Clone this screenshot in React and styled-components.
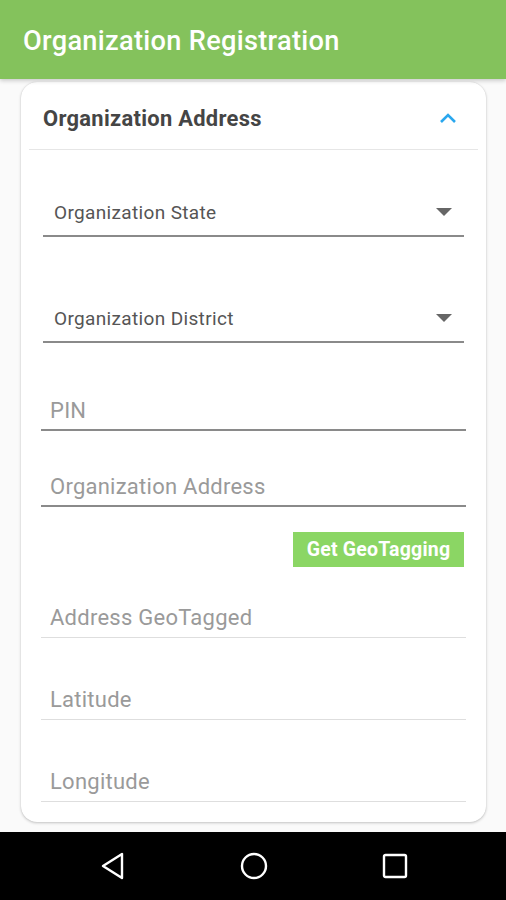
import React from "react";
import styled, { createGlobalStyle } from "styled-components";

const Global = createGlobalStyle`
  html, body { margin: 0; padding: 0; }
  body { background: #fafafa; font-family: Roboto, "Noto Sans", sans-serif; }
`;

const Page = styled.div`
  width: 506px;
  height: 900px;
  display: flex;
  flex-direction: column;
  overflow: hidden;
  background: #fafafa;
`;

const AppBar = styled.header`
  height: 79px;
  box-sizing: border-box;
  flex-shrink: 0;
  background: #84c25c;
  display: flex;
  align-items: center;
  padding: 3px 23px 0;
  box-shadow: 0 2px 4px rgba(0, 0, 0, 0.18);
  position: relative;
  z-index: 1;
`;

const AppTitle = styled.h1`
  margin: 0;
  color: #fff;
  font-size: 27.2px;
  font-weight: 500;
  letter-spacing: 0.3px;
`;

const Content = styled.main`
  flex: 1;
  padding: 3px 20px 0 21px;
`;

const Card = styled.section`
  background: #fff;
  border-radius: 16px;
  box-shadow: 0 1px 3px rgba(0, 0, 0, 0.22), 0 0 1px rgba(0, 0, 0, 0.15);
  padding-bottom: 20px;
`;

const CardHeader = styled.div`
  height: 67px;
  display: flex;
  align-items: center;
  justify-content: space-between;
  padding: 5px 29px 0 22px;
  box-sizing: border-box;
`;

const CardTitle = styled.h2`
  margin: 0;
  font-size: 21.9px;
  font-weight: 700;
  letter-spacing: 0.3px;
  color: #454545;
`;

const Divider = styled.div`
  height: 1px;
  background: #e6e6e6;
  margin: 0 8px;
`;

const Form = styled.div`
  display: flex;
  flex-direction: column;
  padding: 0 20px;
`;

const Select = styled.div`
  height: 46px;
  margin: ${(p) => p.$mt}px 2px 0;
  display: flex;
  align-items: center;
  justify-content: space-between;
  padding: 0 12px 0 11px;
  border-bottom: 2px solid #8a8a8a;
`;

const SelectLabel = styled.span`
  font-size: 19px;
  letter-spacing: 0.35px;
  color: #555;
`;

const Caret = styled.span`
  width: 0;
  height: 0;
  border-left: 8px solid transparent;
  border-right: 8px solid transparent;
  border-top: 8px solid #666;
`;

const Field = styled.div`
  height: ${(p) => (p.$light ? 39 : 38)}px;
  margin-top: ${(p) => p.$mt}px;
  display: flex;
  align-items: center;
  padding: 2px 0 0 9px;
  box-sizing: content-box;
  border-bottom: ${(p) => (p.$light ? "1px solid #dedede" : "2px solid #8a8a8a")};
  font-size: 22px;
  letter-spacing: 0.25px;
  color: #9a9a9a;
`;

const ButtonRow = styled.div`
  display: flex;
  justify-content: flex-end;
  margin-top: 25px;
  padding-right: 2px;
`;

const GeoButton = styled.button`
  width: 171px;
  height: 35px;
  border: none;
  background: #8bd664;
  color: #fff;
  font-family: Roboto, sans-serif;
  font-size: 19.5px;
  font-weight: 700;
  letter-spacing: 0.2px;
  padding: 0;
`;

const NavBar = styled.nav`
  height: 68px;
  flex-shrink: 0;
  margin-top: 9px;
  background: #000;
  display: flex;
  align-items: center;
  justify-content: space-between;
  padding: 0 98px 0 100px;
`;

const NavIcon = styled.svg`
  display: block;
`;

export default function App() {
  return (
    <Page>
      <Global />
      <AppBar>
        <AppTitle>Organization Registration</AppTitle>
      </AppBar>
      <Content>
        <Card>
          <CardHeader>
            <CardTitle>Organization Address</CardTitle>
            <svg width="18" height="12" viewBox="0 0 18 12">
              <path d="M2 10 L9 3 L16 10" fill="none" stroke="#2aa7ee" strokeWidth="2.6" />
            </svg>
          </CardHeader>
          <Divider />
          <Form>
            <Select $mt={39}>
              <SelectLabel>Organization State</SelectLabel>
              <Caret />
            </Select>
            <Select $mt={58}>
              <SelectLabel>Organization District</SelectLabel>
              <Caret />
            </Select>
            <Field $mt={46}>PIN</Field>
            <Field $mt={34}>Organization Address</Field>
            <ButtonRow>
              <GeoButton>Get GeoTagging</GeoButton>
            </ButtonRow>
            <Field $light $mt={29}>Address GeoTagged</Field>
            <Field $light $mt={40}>Latitude</Field>
            <Field $light $mt={40}>Longitude</Field>
          </Form>
        </Card>
      </Content>
      <NavBar>
        <NavIcon width="26" height="28" viewBox="0 0 26 28">
          <path d="M22 2 L22 26 L3 14 Z" fill="none" stroke="#fff" strokeWidth="2.4" strokeLinejoin="round" />
        </NavIcon>
        <NavIcon width="28" height="28" viewBox="0 0 28 28">
          <circle cx="14" cy="14" r="12" fill="none" stroke="#fff" strokeWidth="2.4" />
        </NavIcon>
        <NavIcon width="26" height="26" viewBox="0 0 26 26">
          <rect x="2" y="2" width="22" height="22" rx="1.5" fill="none" stroke="#fff" strokeWidth="2.4" />
        </NavIcon>
      </NavBar>
    </Page>
  );
}
